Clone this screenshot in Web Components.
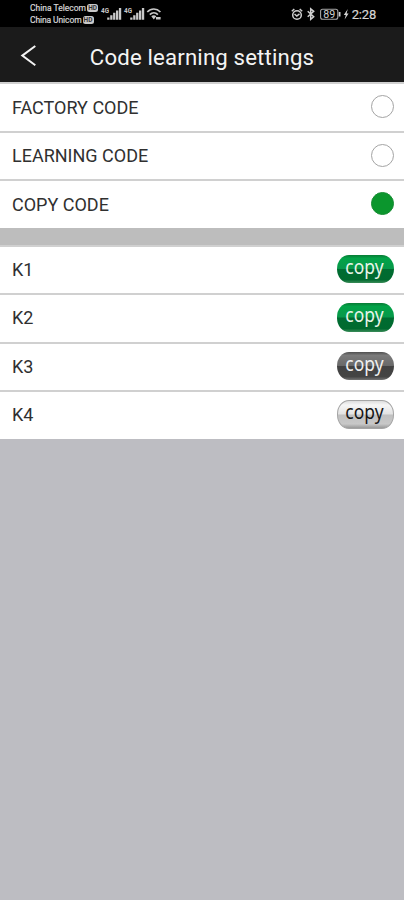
<!DOCTYPE html>
<html lang="en">
<head>
<meta charset="utf-8">
<title>Code learning settings</title>
<style>
html,body{margin:0;height:100%;background:#bdbdc2}
body{font-family:Roboto,"Liberation Sans",sans-serif;overflow:hidden}
</style>
</head>
<body>
<settings-screen></settings-screen>
<script>
const define = (name, html) => customElements.define(name, class extends HTMLElement {
  connectedCallback() {
    if (this.shadowRoot) return;
    this.attachShadow({mode: 'open'}).innerHTML = html;
  }
});

define('status-bar', `<style>
:host{display:flex;flex:none;height:27px;background:#000;color:#d6d6d6;box-sizing:border-box;padding:0 28px 0 30px;justify-content:space-between}
.left,.right{display:flex;align-items:flex-start}
.carriers{display:grid;grid-template-rows:12px 12px;padding-top:2px;font-size:8.5px;line-height:12px;width:70px;white-space:nowrap;-webkit-text-stroke:.2px #d6d6d6}
.carriers div{display:flex;align-items:center;gap:1px}
.carriers div+div{letter-spacing:-.1px}
.hd{font-size:6.5px;line-height:8px;height:8px;width:11px;text-align:center;border-radius:2.5px;background:#c8c8c8;color:#333;font-weight:700;-webkit-text-stroke:0;letter-spacing:0}
svg{display:block;flex:none}
.time{font-size:13px;line-height:15px;letter-spacing:-.2px;margin-left:3px;padding-top:7px;-webkit-text-stroke:.2px #d6d6d6}
</style>
<div class="left">
 <div class="carriers"><div><span>China Telecom</span><span class="hd">HD</span></div><div><span>China Unicom</span><span class="hd">HD</span></div></div>
 <svg width="62" height="27" viewBox="100 0 62 27" fill="#c8c8c8">
  <g id="s"><text x="101" y="13.3" font-size="7" font-weight="700" textLength="8" lengthAdjust="spacingAndGlyphs">4G</text>
  <path d="M107.2 17.5h2.3v2.2h-2.3zM110.2 15.3h2.3v4.4h-2.3zM113.1 12.8h2.3v6.9h-2.3zM116 10.4h2.3v9.3H116zM118.9 8h2.3v11.7h-2.3z"/></g>
  <use href="#s" x="23"/>
  <g fill="none" stroke="#c8c8c8" stroke-width="1.7"><path d="M147.3 12c3.8-4 9.3-4 13.1 0M149.8 14.6c2.4-2.4 5.7-2.4 8.1 0"/></g>
  <path d="M151.3 16.2q2.5-1.8 5 0l-2.5 3.3zM156 17h4.6v2.6H156z"/>
 </svg>
</div>
<div class="right">
 <svg width="58" height="27" viewBox="290 0 58 27" fill="none" stroke="#cfcfcf" stroke-width="1.5">
  <circle cx="296" cy="15" r="4.3"/><path d="M290.8 11.2l2.5-2.2M301.2 11.2l-2.5-2.2M293.5 14l2.3 2 2.7-2.2"/>
  <path d="M306.7 11.3l6 5.4-3 2.6V8.8l3 2.5-6 5.4"/>
  <rect x="319.6" y="9.3" width="17.2" height="10" rx="2" stroke="#a5a5a5" stroke-width="1.1"/><path d="M338.6 12v4.5" stroke-width="1.8"/>
  <text x="322.3" y="18" font-size="10" fill="#cfcfcf" stroke="none" textLength="12" lengthAdjust="spacingAndGlyphs">89</text>
  <path d="M346.8 9l-4 6h2l-1.2 4.5 4-6h-2z" fill="#d6d6d6" stroke="none"/>
 </svg><span class="time">2:28</span>
</div>`);

define('nav-header', `<style>
:host{display:grid;flex:none;grid-template-columns:56px 1fr 56px;align-items:center;height:55.25px;background:#1b1b1b;color:#f4f4f4;box-sizing:border-box;padding-top:3px}
h1{margin:0;padding-top:2px;font-size:22.2px;line-height:28px;font-weight:400;text-align:center;white-space:nowrap;letter-spacing:.16px}
svg{display:block;margin-left:20px}
</style>
<svg width="18" height="24" fill="none" stroke="#f2f2f2" stroke-width="2"><path d="M15.3 2L2.3 11.6l13 9.6"/></svg>
<h1><slot></slot></h1>`);

define('setting-row', `<style>
:host{display:flex;align-items:center;justify-content:space-between;height:48.5px;box-sizing:border-box;border-top:2px solid #d0d0d0;background:#fff;padding:0 10px 0 12px;color:#303030;font-size:18px}
.label{line-height:24px;white-space:nowrap}
</style><span class="label"><slot></slot></span><slot name="control"></slot>`);

define('radio-dot', `<style>
:host{display:block;box-sizing:border-box;width:23px;height:23px;border:1.5px solid #a4a4a4;border-radius:50%;margin-top:-2px;background:#fff}
:host([checked]){background:#0b962d;border-color:#188d34}
</style>`);

define('copy-button', `<style>
:host{display:flex;justify-content:center;box-sizing:border-box;width:57px;height:28.5px;border-radius:12px/14px;margin-top:-2px;
 color:#e8f5e9;background:linear-gradient(#087b35 0,#02a348 12%,#08984a 49%,#006c31 51%,#006a2f 88%,#3b8c59)}
:host([tone=dark]){color:#f0f0f0;background:linear-gradient(#4f4f4f 0,#7b7b7b 12%,#696969 49%,#424242 51%,#444 88%,#747474)}
:host([tone=light]){color:#151515;background:linear-gradient(#ddd,#f6f6f6 15%,#e2e2e2 49%,#c0c0c0 51%,#c8c8c8 85%,#999);border:1px solid #a5a5a5}
span{font:20.5px/22px "Noto Sans","Open Sans",sans-serif;transform:translate(-1px,-.5px) scaleX(.85)}
:host([tone=light]) span{margin-top:-1px}
</style><span><slot></slot></span>`);

define('settings-screen', `<style>
:host{display:flex;flex-direction:column;width:404px;height:900px;background:#bdbdc2}
.group{display:flex;flex-direction:column;flex:none}
.gap{height:16.75px;background:#bdbdbd;flex:none}
</style>
<status-bar></status-bar>
<nav-header>Code learning settings</nav-header>
<div class="group">
<setting-row>FACTORY CODE<radio-dot slot="control"></radio-dot></setting-row>
<setting-row>LEARNING CODE<radio-dot slot="control"></radio-dot></setting-row>
<setting-row>COPY CODE<radio-dot slot="control" checked></radio-dot></setting-row>
</div>
<div class="gap"></div>
<div class="group">
<setting-row>K1<copy-button slot="control">copy</copy-button></setting-row>
<setting-row>K2<copy-button slot="control">copy</copy-button></setting-row>
<setting-row>K3<copy-button slot="control" tone="dark">copy</copy-button></setting-row>
<setting-row>K4<copy-button slot="control" tone="light">copy</copy-button></setting-row>
</div>`);
</script>
</body>
</html>
